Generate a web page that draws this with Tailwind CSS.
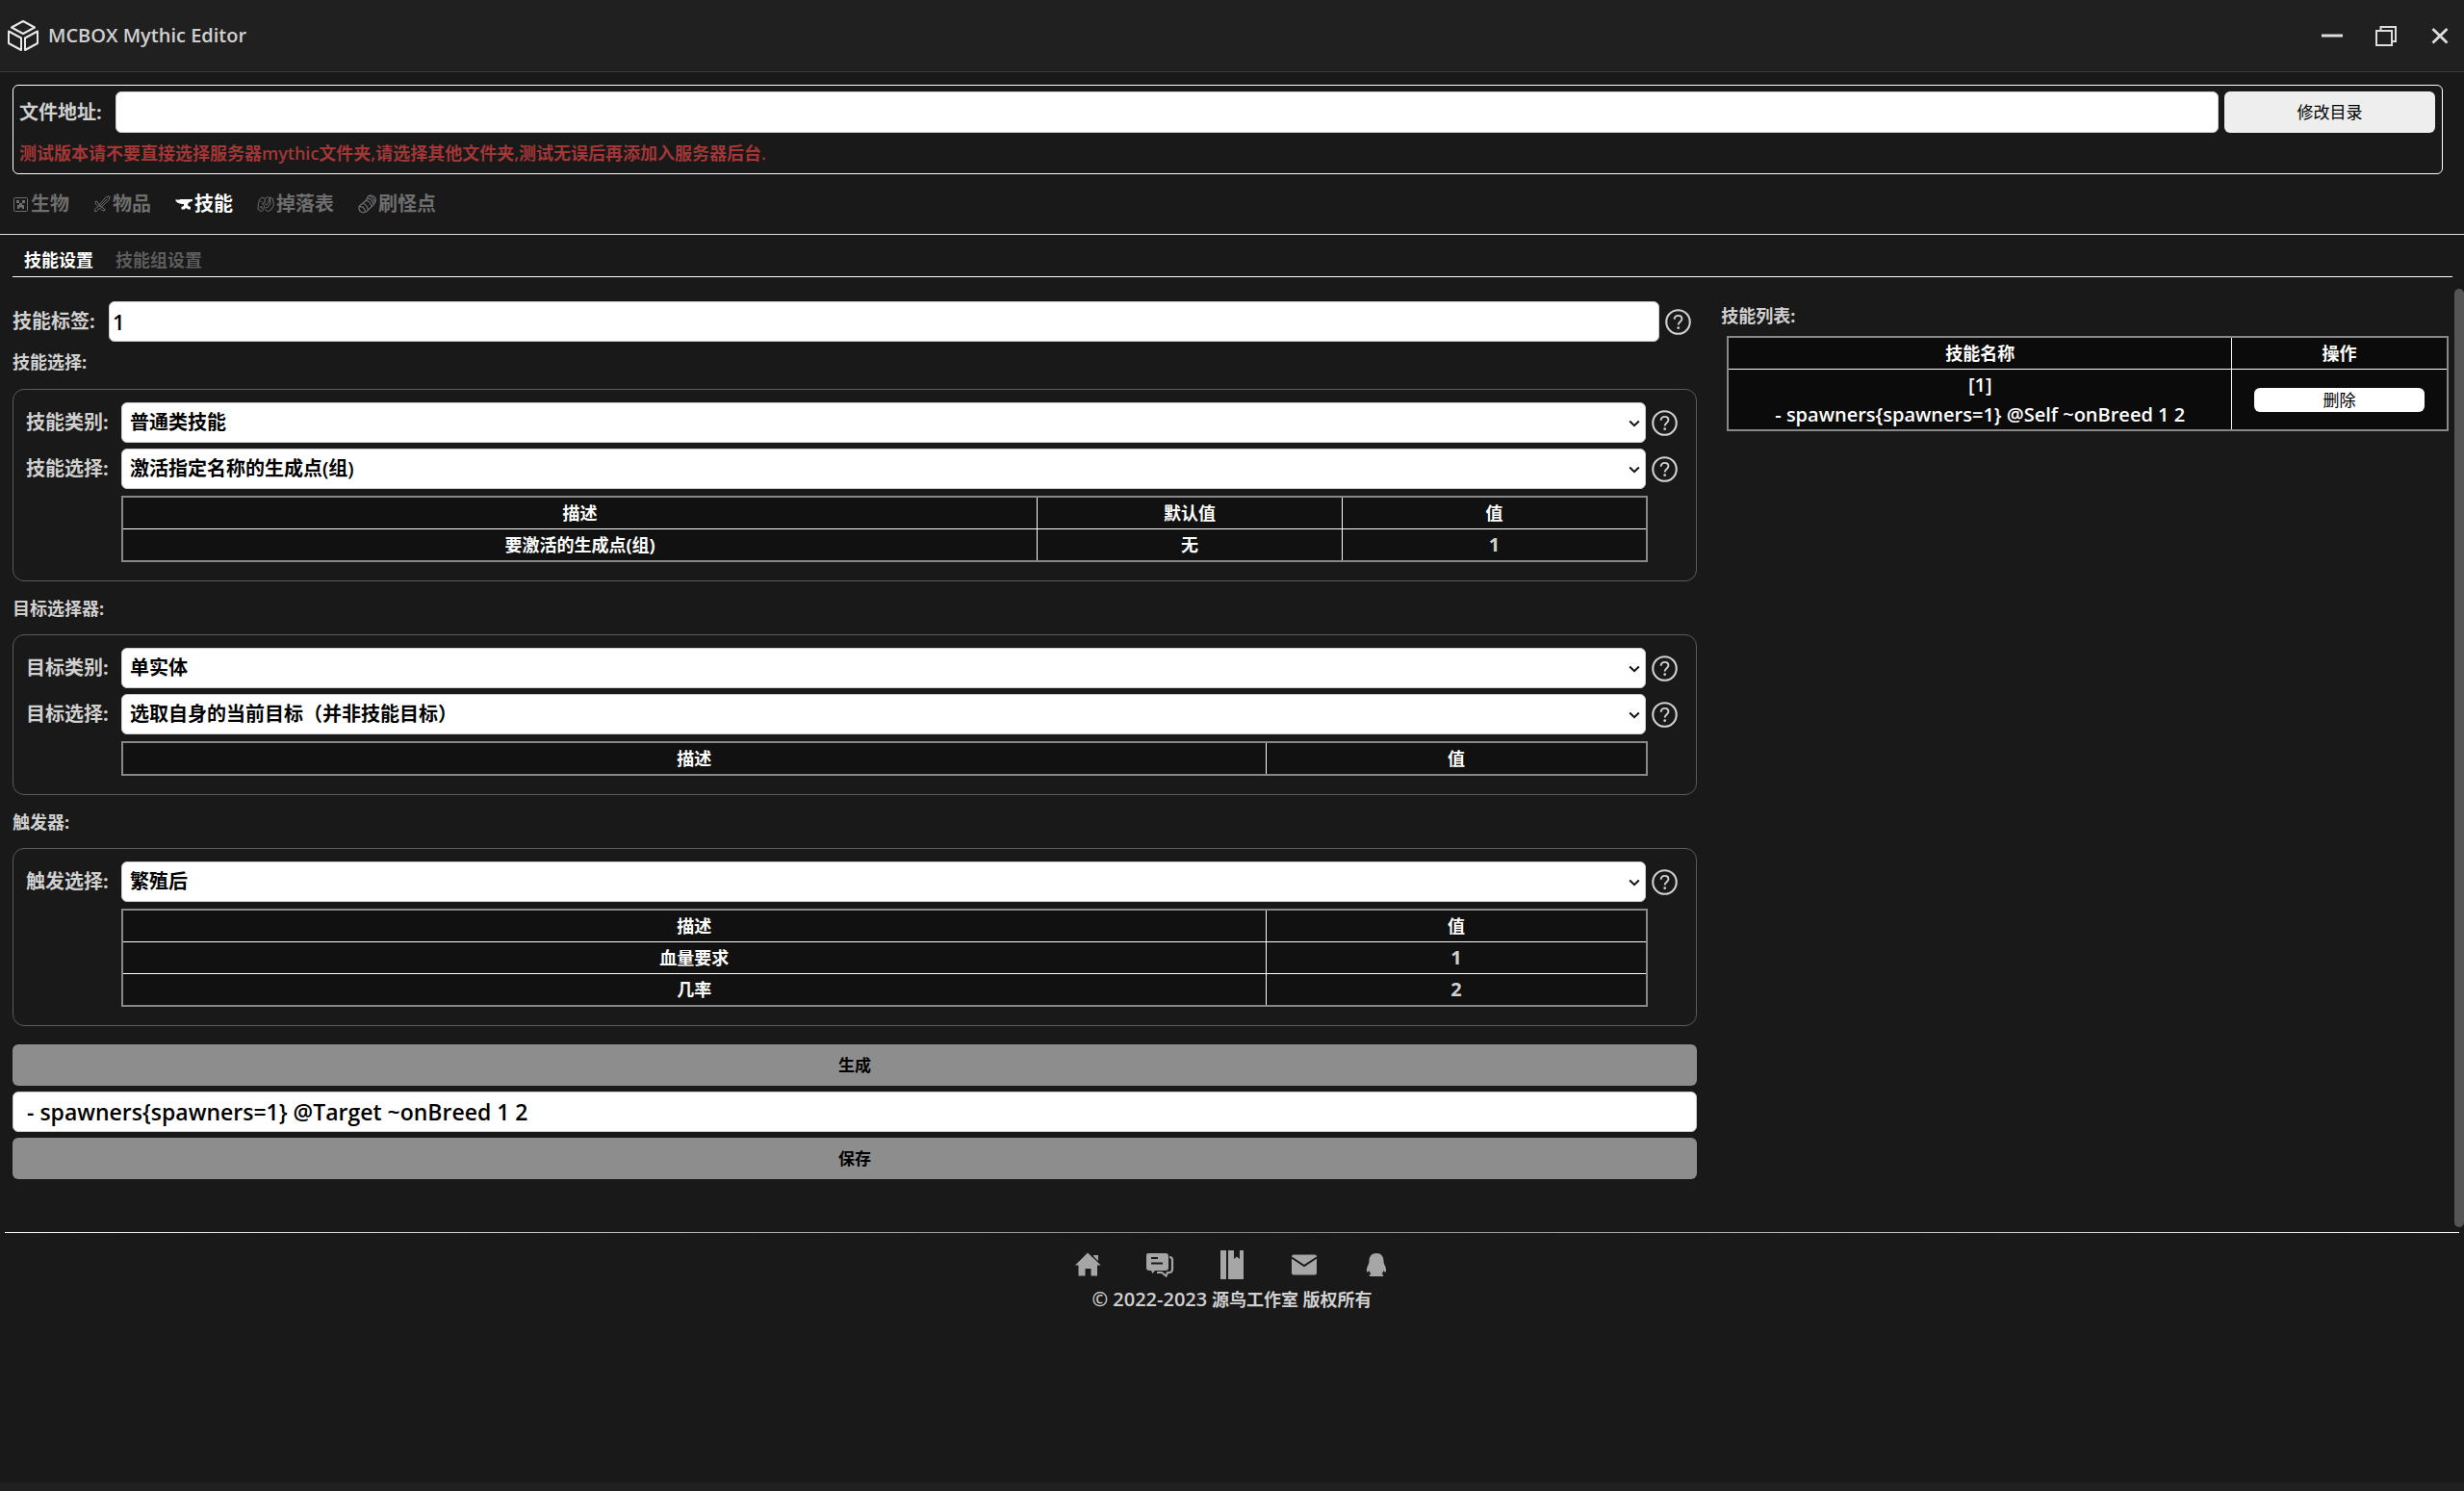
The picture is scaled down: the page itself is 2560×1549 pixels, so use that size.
<!DOCTYPE html>
<html lang="zh-CN">
<head>
<meta charset="utf-8">
<meta name="viewport" content="width=device-width, initial-scale=1">
<title>MCBOX Mythic Editor</title>
<script src="https://cdn.jsdelivr.net/npm/@tailwindcss/browser@4"></script>
</head>
<body class="flex min-h-screen flex-col bg-[#191919] text-[#d0d0d0] font-['Open_Sans','Noto_Sans_CJK_SC',sans-serif] font-semibold">
<svg class="hidden">
  <symbol id="help" viewBox="0 0 28 28"><circle cx="14" cy="14" r="12.700" fill="none" stroke="currentColor" stroke-width="2.200"/><path d="M10 11.200c0-2.500 1.700-4.100 4.100-4.100 2.300 0 4 1.500 4 3.600 0 3-3.900 3.200-3.900 6.500" fill="none" stroke="currentColor" stroke-width="2"/><circle cx="14.200" cy="20.400" r="1.400" fill="currentColor"/></symbol>
  <symbol id="chevron" viewBox="0 0 12 8"><path d="M1.200 1.500 6 6.200l4.800-4.700" fill="none" stroke="#111" stroke-width="2"/></symbol>
</svg>

<header class="flex h-[75px] items-center justify-between border-b border-[#3a3a3a] bg-[#202020] pl-2 pr-[13px]">
  <div class="flex items-center gap-[10px]">
    <svg class="h-8 w-8" viewBox="0 0 32 32" fill="none" stroke="#e8e8e8" stroke-width="2" stroke-linejoin="round"><path d="M16 1 28 7.500 16 14 4 7.500z"/><path d="M1 11.500 14 18.500V31L1 24z"/><path d="M31 11.500 18 18.500V31L31 24z"/></svg>
    <h1 class="text-[20px] leading-6">MCBOX Mythic Editor</h1>
  </div>
  <div class="flex items-center gap-8">
    <button type="button" aria-label="最小化" class="grid size-6 place-items-center"><svg class="h-6 w-6" viewBox="0 0 24 24"><path d="M1 12h22" stroke="#ddd" stroke-width="3"/></svg></button>
    <button type="button" aria-label="还原" class="grid size-6 place-items-center"><svg class="h-6 w-6" viewBox="0 0 24 24" fill="none" stroke="#ddd" stroke-width="2"><path d="M2 7h16v15H2zM6.500 6V3H22V18h-3.500"/></svg></button>
    <button type="button" aria-label="关闭" class="grid size-6 place-items-center"><svg class="h-6 w-6" viewBox="0 0 24 24"><path d="M4.500 5 19.500 19.500M19.500 5 4.500 19.500" stroke="#ddd" stroke-width="2.800"/></svg></button>
  </div>
</header>

<section class="ml-[13px] mr-[22px] mt-[13px] rounded-md border border-white pb-2 pl-[6px] pr-[7px] pt-[6px]">
  <div class="flex items-center gap-[6px]">
    <label for="path" class="w-[94px] text-[20px] leading-6 font-bold">文件地址:</label>
    <input id="path" type="text" class="h-[43px] min-w-0 flex-1 rounded-md border border-[#ccc] bg-white px-1 text-[20px] text-black">
    <button type="button" class="h-[43px] w-[219px] rounded-md bg-[#eee] text-[17px] font-normal text-black">修改目录</button>
  </div>
  <p class="mt-[8px] text-[18px] leading-[26px] text-[#a33636]">测试版本请不要直接选择服务器mythic文件夹,请选择其他文件夹,测试无误后再添加入服务器后台.</p>
</section>

<nav class="flex h-[63px] items-center gap-[25px] border-b border-[#ddd] pl-[13px] text-[20px] leading-6 text-[#6e6e6e]">
  <a href="#mobs" class="flex items-center gap-[2px]"><svg class="h-[17px] w-[17px]" viewBox="0 0 17 17"><rect x="1.500" y="1.500" width="14" height="14" rx="1" fill="none" stroke="currentColor"/><path d="M4 4h3v3H4zM10 4h3v3h-3zM7 7h3v2h2v4h-2v-1.500H7V13H5V9h2z" fill="currentColor"/></svg>生物</a>
  <a href="#items" class="flex items-center gap-[2px]"><svg class="h-[18px] w-[18px]" viewBox="0 0 18 18" fill="none" stroke="currentColor"><path d="M17 1 13.500 1.500 5.500 10 8 12.500 16.500 4.500zM14.500 3.500 6.800 11.200M2 6.500 3.500 6 6 9.500 8.500 12 12 14.500 11.500 16 9 15.500 6.500 13 3.500 16.500 1.500 16.500 1.500 14.500 5 11.500 2.500 9z"/></svg>物品</a>
  <a href="#skills" class="flex items-center gap-[2px] font-bold text-white"><svg class="h-[18px] w-[18px]" viewBox="0 0 18 18" fill="currentColor"><path d="M5 4h13v2c-3 .5-4.500 1.500-5 3.500.3 1.500 1.500 2 3 2.500v2.500h-2.500l-2-1.500-2 1.500H6.500V12c2-.5 3-1.500 2.500-3H7C4 8.500 1 7.500 0 4.500h5z"/></svg>技能</a>
  <a href="#drops" class="flex items-center gap-[2px]"><svg class="h-[18px] w-[18px]" viewBox="0 0 18 18" fill="none" stroke="currentColor"><path d="M2.500 4.500 5.500 2l3 1.500-.5 3.500-2.500 1.500 2 2-.5 4-2.500 2-3.500-2 .5-6zM3.500 7 5 5.500M3 12.500l2-1v2.500M9 3l2.500-1.500 1.500 2-1.500 5-2 1.500L8 8M13.500 2l3 1.500 1 6.500-3 5-3 1.500-3-1.500M13.500 2 14 8.500l-3 4-2.500.5"/></svg>掉落表</a>
  <a href="#spawners" class="flex items-center gap-[2px]"><svg class="h-5 w-[19px]" viewBox="0 0 19 20" fill="none" stroke="currentColor" stroke-width="1.200"><path d="M9.500 4.500C10 2 12 .7 14 1c3 .5 5 3 4.200 6L16 11l-7 6.500c-2 1.500-4.500 1.500-6 .5S.5 15 1 13s3-3.500 5-4.500zM9.500 4.500c3-.5 5.500 2 6.500 5.500M8 6.500c3 0 5 2.500 6 5.500M12 2c2.500.5 4.500 2.500 5.500 6M1 13c3-1.500 6 1 6.500 5M4.500 9.500c3 0 5 2.500 6 6.500"/></svg>刷怪点</a>
</nav>

<nav class="ml-[13px] mr-[12px] flex h-[44px] items-end gap-[23px] border-b border-white pb-[6px] pl-3 text-[18px] leading-[22px] text-[#5c5c5c]">
  <a href="#skill" class="font-bold text-white">技能设置</a>
  <a href="#skill-group">技能组设置</a>
</nav>

<div class="mt-3 flex min-h-[975px]">
<main class="grid min-w-0 flex-1 grid-cols-[44fr_19fr] items-start gap-[25px] pl-[13px] pr-[6px] pt-[13px]">
  <form>
    <div class="flex items-center gap-[6px] pr-[6px]">
      <label for="tag" class="w-[94px] text-[20px] leading-6 font-bold">技能标签:</label>
      <input id="tag" type="text" value="1" class="h-[42px] min-w-0 flex-1 rounded-md border border-[#ccc] bg-white px-[3px] text-[22px] text-black">
      <button type="button" aria-label="帮助"><svg class="size-[27px]"><use href="#help"/></svg></button>
    </div>

    <h2 class="mt-[9px] h-6 text-[18px] leading-6 font-bold">技能选择:</h2>
    <section class="mt-4 rounded-xl border border-[#5a5a5a] pb-[19px] pl-[13px] pr-[19px] pt-[13px]">
      <div class="grid grid-cols-[93px_1fr_27px] items-center gap-x-[6px] gap-y-[6px]">
        <label for="s1" class="text-[20px] leading-6 font-bold">技能类别:</label>
        <div class="relative"><select id="s1" class="block h-[42px] w-full appearance-none rounded-md border border-[#ccc] bg-white px-2 text-[20px] text-black"><option>普通类技能</option></select><svg class="pointer-events-none absolute right-[6px] top-[18px] h-2 w-3"><use href="#chevron"/></svg></div>
        <button type="button" aria-label="帮助"><svg class="size-[27px]"><use href="#help"/></svg></button>
        <label for="s2" class="text-[20px] leading-6 font-bold">技能选择:</label>
        <div class="relative"><select id="s2" class="block h-[42px] w-full appearance-none rounded-md border border-[#ccc] bg-white px-2 text-[20px] text-black"><option>激活指定名称的生成点(组)</option></select><svg class="pointer-events-none absolute right-[6px] top-[18px] h-2 w-3"><use href="#chevron"/></svg></div>
        <button type="button" aria-label="帮助"><svg class="size-[27px]"><use href="#help"/></svg></button>
      </div>
      <div class="ml-[99px] mr-[31px] mt-[7px]">
        <table class="w-full table-fixed border-collapse border-2 border-[#888] bg-[#111] text-center text-[18px] leading-8 text-white">
          <colgroup><col class="w-[60%]"><col class="w-[20%]"><col class="w-[20%]"></colgroup>
          <thead><tr class="font-black"><th class="h-[33px] border border-white">描述</th><th class="border border-white">默认值</th><th class="border border-white">值</th></tr></thead>
          <tbody><tr class="font-bold"><td class="border border-white">要激活的生成点(组)</td><td class="border border-white">无</td><td class="border border-white text-[20px] text-[#d0d0d0]">1</td></tr></tbody>
        </table>
      </div>
    </section>

    <h2 class="mt-4 h-6 text-[18px] leading-6 font-bold">目标选择器:</h2>
    <section class="mt-[15px] rounded-xl border border-[#5a5a5a] pb-[19px] pl-[13px] pr-[19px] pt-[13px]">
      <div class="grid grid-cols-[93px_1fr_27px] items-center gap-x-[6px] gap-y-[6px]">
        <label for="t1" class="text-[20px] leading-6 font-bold">目标类别:</label>
        <div class="relative"><select id="t1" class="block h-[42px] w-full appearance-none rounded-md border border-[#ccc] bg-white px-2 text-[20px] text-black"><option>单实体</option></select><svg class="pointer-events-none absolute right-[6px] top-[18px] h-2 w-3"><use href="#chevron"/></svg></div>
        <button type="button" aria-label="帮助"><svg class="size-[27px]"><use href="#help"/></svg></button>
        <label for="t2" class="text-[20px] leading-6 font-bold">目标选择:</label>
        <div class="relative"><select id="t2" class="block h-[42px] w-full appearance-none rounded-md border border-[#ccc] bg-white px-2 text-[20px] text-black"><option>选取自身的当前目标（并非技能目标）</option></select><svg class="pointer-events-none absolute right-[6px] top-[18px] h-2 w-3"><use href="#chevron"/></svg></div>
        <button type="button" aria-label="帮助"><svg class="size-[27px]"><use href="#help"/></svg></button>
      </div>
      <div class="ml-[99px] mr-[31px] mt-[7px]">
        <table class="w-full table-fixed border-collapse border-2 border-[#888] bg-[#111] text-center text-[18px] leading-8 text-white">
          <colgroup><col class="w-[75%]"><col class="w-[25%]"></colgroup>
          <thead><tr class="font-black"><th class="h-[33px] border border-white">描述</th><th class="border border-white">值</th></tr></thead>
        </table>
      </div>
    </section>

    <h2 class="mt-4 h-6 text-[18px] leading-6 font-bold">触发器:</h2>
    <section class="mt-[15px] rounded-xl border border-[#5a5a5a] pb-[19px] pl-[13px] pr-[19px] pt-[13px]">
      <div class="grid grid-cols-[93px_1fr_27px] items-center gap-x-[6px]">
        <label for="g1" class="text-[20px] leading-6 font-bold">触发选择:</label>
        <div class="relative"><select id="g1" class="block h-[42px] w-full appearance-none rounded-md border border-[#ccc] bg-white px-2 text-[20px] text-black"><option>繁殖后</option></select><svg class="pointer-events-none absolute right-[6px] top-[18px] h-2 w-3"><use href="#chevron"/></svg></div>
        <button type="button" aria-label="帮助"><svg class="size-[27px]"><use href="#help"/></svg></button>
      </div>
      <div class="ml-[99px] mr-[31px] mt-[7px]">
        <table class="w-full table-fixed border-collapse border-2 border-[#888] bg-[#111] text-center text-[18px] leading-8 text-white">
          <colgroup><col class="w-[75%]"><col class="w-[25%]"></colgroup>
          <thead><tr class="font-black"><th class="h-[33px] border border-white">描述</th><th class="border border-white">值</th></tr></thead>
          <tbody>
            <tr class="font-bold"><td class="border border-white">血量要求</td><td class="border border-white text-[20px] text-[#d0d0d0]">1</td></tr>
            <tr class="font-bold"><td class="border border-white">几率</td><td class="border border-white text-[20px] text-[#d0d0d0]">2</td></tr>
          </tbody>
        </table>
      </div>
    </section>

    <div class="mt-[19px] flex flex-col gap-[6px]">
      <button type="button" class="h-[43px] rounded-md bg-[#8d8d8d] text-[17px] text-black">生成</button>
      <input type="text" aria-label="生成结果" value="- spawners{spawners=1} @Target ~onBreed 1 2" class="h-[42px] rounded-md border border-[#ccc] bg-white px-[14px] text-[23px] text-black">
      <button type="submit" class="h-[43px] rounded-md bg-[#8d8d8d] text-[17px] text-black">保存</button>
    </div>
  </form>

  <aside class="min-w-0 pt-[3px]">
    <h2 class="h-6 text-[18px] leading-6 font-bold">技能列表:</h2>
    <div class="ml-[6px] mt-[9px]">
      <table class="w-full table-fixed border-collapse border-2 border-[#888] bg-[#0b0b0b] text-center text-[18px] leading-8 text-white">
        <colgroup><col class="w-[70%]"><col class="w-[30%]"></colgroup>
        <thead><tr class="font-black"><th class="h-[33px] border border-white">技能名称</th><th class="border border-white">操作</th></tr></thead>
        <tbody><tr>
          <td class="border border-white text-[20px] leading-[31px] font-semibold">[1]<br>- spawners{spawners=1} @Self ~onBreed 1 2</td>
          <td class="border border-white px-[23px]"><button type="button" class="block h-[25px] w-full rounded-md bg-white text-[17px] leading-[25px] font-normal text-black">删除</button></td>
        </tr></tbody>
      </table>
    </div>
  </aside>
</main>
<div class="w-[10px] rounded-full bg-[#555]"></div>
</div>

<footer class="px-[5px] pt-[5px]">
  <div class="h-px bg-linear-to-r from-white via-[#888] to-white"></div>
  <div class="mt-[17px] flex items-center justify-center gap-[43px] text-[#a6a6a6]">
    <a href="#home" aria-label="主页"><svg class="h-8 w-8" viewBox="0 0 32 32" fill="currentColor"><path d="M16 3.500 22 9V6h5v7.500l2.500 3H26v11h-6.500V20h-6v7.500H6.500v-11H3z"/><path d="M20.500 6.500 28 14" stroke="#191919" stroke-width="1.200"/></svg></a>
    <a href="#chat" aria-label="交流"><svg class="h-8 w-8" viewBox="0 0 32 32"><path d="M4 4h18a3 3 0 0 1 3 3v12a3 3 0 0 1-3 3H11l-2.500 3L7 22H5a3 3 0 0 1-3-3V6q0-2 2-2z" fill="currentColor"/><path d="M7 9h7M7 14.500h12" stroke="#191919" stroke-width="2.200"/><path d="M26 8q3 0 3 3v9q0 4-3 4h-2l-1.500 3.500L18 24h-5" fill="none" stroke="currentColor" stroke-width="2.200"/></svg></a>
    <a href="#docs" aria-label="文档"><svg class="h-8 w-8" viewBox="0 0 32 32" fill="currentColor"><path d="M4 1h6v30H4zM12 1h6v9l3-2.500 3 2.500V1h4v30H12z"/></svg></a>
    <a href="#mail" aria-label="邮箱"><svg class="h-8 w-8" viewBox="0 0 32 32"><rect x="3" y="5.500" width="26" height="21" rx="2" fill="currentColor"/><path d="M3 8.500 16 17 29 8.500" fill="none" stroke="#191919" stroke-width="2"/></svg></a>
    <a href="#qq" aria-label="QQ"><svg class="h-8 w-8" viewBox="0 0 32 32" fill="currentColor"><path d="M16 4c5 0 7.500 3.500 7.500 8 0 2 .5 3 1.500 5 1 2.500 1.500 5 .7 6.500-.7.500-1.700-.5-2.200-1.500-.3 1.500-1 2.500-2 3.500 2 .7 2.500 2.500.5 2.500H10c-2 0-1.500-1.800.5-2.500-1-1-1.700-2-2-3.500-.5 1-1.500 2-2.200 1.500-.8-1.500-.3-4 .7-6.500 1-2 1.500-3 1.500-5C8.500 7.500 11 4 16 4z"/></svg></a>
  </div>
  <p class="mt-2 text-center text-[18px] leading-6 font-bold"><span class="text-[20px] font-semibold">© 2022-2023</span> 源鸟工作室 版权所有</p>
</footer>
<div class="mt-auto h-[9px] bg-[#202020]"></div>
</body>
</html>
